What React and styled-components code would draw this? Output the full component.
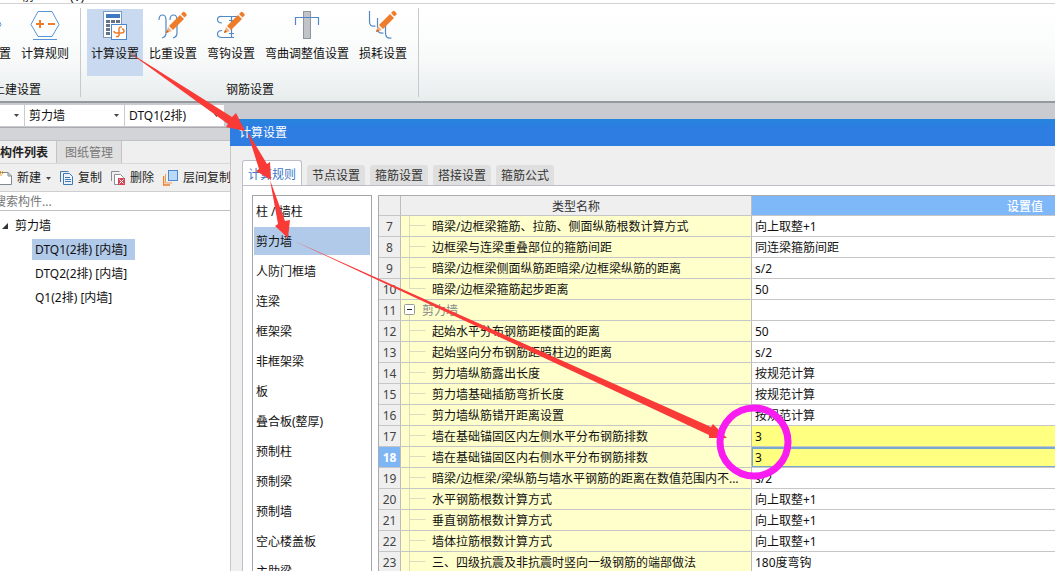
import React, { useState } from "react";
import styled, { createGlobalStyle, css } from "styled-components";

const Global = createGlobalStyle`
  *, *::before, *::after { box-sizing: border-box; }
  html, body, #root { height: 100%; margin: 0; }
  body {
    overflow: hidden;
    background: #fff;
    color: #111;
    font: 12px/20px "Noto Sans", "Noto Sans CJK SC", sans-serif;
  }
  button, input, select { font: inherit; color: inherit; margin: 0; }
`;

const Shell = styled.div`
  position: relative;
  display: flex;
  flex-direction: column;
  height: 100vh;
  overflow: hidden;
`;

/* ---------- ribbon ---------- */
const MenuStrip = styled.div`
  display: flex;
  align-items: flex-end;
  gap: 36px;
  height: 4px;
  padding-left: 22px;
  overflow: hidden;
  border-bottom: 1px solid #d2d2d2;
`;
const MenuLabel = styled.span`
  line-height: 12px;
`;
const Ribbon = styled.div`
  display: flex;
  height: 99px;
  padding: 4px 0;
  background: linear-gradient(#ffffff 10%, #f7f9f9 60%, #e7ecec);
  border-bottom: 2px solid #949a9c;
`;
const GroupClip = styled.div`
  display: flex;
  justify-content: flex-end;
  width: ${(p) => p.$width || "auto"};
  overflow: hidden;
  border-right: 1px solid #c6cacc;
`;
const Group = styled.section`
  flex: none;
  display: flex;
  flex-direction: column;
  justify-content: space-between;
  padding: 1px 7px 0 6px;
`;
const GroupItems = styled.div`
  display: flex;
  gap: 2px;
`;
const GroupTitle = styled.div`
  padding-left: 2px;
  text-align: center;
  line-height: 14px;
`;
const RibbonButton = styled.button`
  display: flex;
  flex-direction: column;
  align-items: center;
  gap: 4px;
  height: 67px;
  padding: 0 4px;
  border: 0;
  white-space: nowrap;
  background: ${(p) => (p.$active ? "#c9d9ef" : "transparent")};
  svg { display: block; width: 32px; height: 32px; }
  span { line-height: 18px; }
`;

/* ---------- selector bar ---------- */
const SelectorBar = styled.div`
  display: flex;
  gap: 1px;
  height: 25px;
  padding: 2px 0;
  background: #c9cbd0;
  border-bottom: 1px solid #a9abb0;
`;
const SelectBox = styled.div`
  position: relative;
  width: ${(p) => p.$width};
  select {
    appearance: none;
    display: block;
    width: 100%;
    height: 21px;
    padding: 0 12px 0 4px;
    border: 0;
    border-radius: 0;
    background: #fff;
  }
  svg { position: absolute; right: 5px; top: 9px; pointer-events: none; }
`;

/* ---------- component panel ---------- */
const Workspace = styled.div`
  flex: 1;
  min-height: 0;
  display: flex;
  padding-top: 12px;
  background: #d2d4d8;
`;
const SidePanel = styled.aside`
  width: 231px;
  display: flex;
  flex-direction: column;
  background: #fff;
  overflow: hidden;
`;
const SideTabs = styled.div`
  display: flex;
  height: 24px;
  background: #efefef;
  border-top: 1px solid #bfc1c5;
  border-bottom: 1px solid #d8d8d8;
`;
const SideTab = styled.button`
  display: flex;
  align-items: center;
  justify-content: flex-end;
  width: ${(p) => (p.$active ? 57 : 65)}px;
  padding: 2px 8px 0;
  border: 0;
  border-right: 1px solid #c4c4c4;
  white-space: nowrap;
  font-weight: ${(p) => (p.$active ? 700 : 400)};
  color: ${(p) => (p.$active ? "#222" : "#777")};
  background: ${(p) => (p.$active ? "#efefef" : "#e0e0e0")};
`;
const ToolRow = styled.div`
  display: flex;
  align-items: center;
  gap: 9px;
  height: 28px;
  padding-top: 1px;
  background: #efefef;
  border-bottom: 1px solid #cfcfcf;
`;
const Tool = styled.button`
  flex: none;
  display: flex;
  align-items: center;
  gap: 5px;
  padding: 0;
  border: 0;
  color: #222;
  background: transparent;
  white-space: nowrap;
  svg { display: block; }
`;
const Search = styled.input`
  height: 19px;
  padding: 1px 0 0;
  border: 0;
  border-bottom: 1px solid #c0c0c0;
  border-radius: 0;
  text-indent: -6px;
  outline: none;
  background: #fff;
  &::placeholder { color: #777; opacity: 1; }
`;
const Tree = styled.ul`
  display: flex;
  flex-direction: column;
  align-items: flex-start;
  gap: 3px;
  list-style: none;
  margin: 0;
  padding: 4px 0 0;
`;
const TreeNode = styled.li`
  display: flex;
  align-items: center;
  gap: 7px;
  height: 21px;
  margin-left: ${(p) => (p.$depth ? 32 : 2)}px;
  padding: ${(p) => (p.$depth ? "1px 8px 0 3px" : "1px 0 0")};
  background: ${(p) => (p.$active ? "#b2caea" : "transparent")};
`;

/* ---------- dialog ---------- */
const Dialog = styled.section`
  position: absolute;
  left: 230px;
  top: 119px;
  right: 0;
  bottom: 0;
  display: flex;
  flex-direction: column;
  overflow: hidden;
  background: #efefef;
`;
const DialogTitle = styled.h1`
  flex: none;
  height: 27px;
  margin: 0;
  padding-left: 9px;
  font-size: 12px;
  font-weight: 400;
  line-height: 28px;
  color: #fff;
  background: linear-gradient(#2585dc, #2d7de2 30%);
`;
const DialogBody = styled.div`
  flex: 1;
  min-height: 0;
  display: flex;
  flex-direction: column;
  padding-left: 11px;
  border-left: 1px solid #c4c6ca;
`;
const DialogTabs = styled.div`
  flex: none;
  display: flex;
  align-items: flex-end;
  gap: 5px;
  height: 39px;
`;
const DialogTab = styled.button`
  flex: none;
  border: 0;
  border-radius: 3px 3px 0 0;
  padding: 2px 5px 0;
  height: 20px;
  line-height: 18px;
  color: #333;
  background: #dfdfdf;
  ${(p) =>
    p.$active &&
    css`
      height: 25px;
      padding-top: 4px;
      border: 1px solid #bcc0c6;
      border-bottom: 0;
      color: #3a78c8;
      background: #fff;
      box-shadow: 0 1px #fff;
    `}
`;
const DialogPage = styled.div`
  flex: 1;
  min-height: 0;
  display: flex;
  align-items: stretch;
  gap: 6px;
  padding: 9px 0 0 9px;
  background: #fff;
  border-top: 1px solid #bcc0c6;
  border-left: 1px solid #bcc0c6;
  overflow: hidden;
`;
const Kinds = styled.ul`
  flex: none;
  width: 120px;
  display: flex;
  flex-direction: column;
  gap: 2px;
  list-style: none;
  margin: 0;
  padding: 1px;
  border: 1px solid #a3a5a8;
  border-bottom: 0;
  overflow: hidden;
`;
const Kind = styled.li`
  flex: none;
  height: 28px;
  padding-left: 2px;
  line-height: 30px;
  background: ${(p) => (p.$active ? "#b2caea" : "transparent")};
`;
const TableArea = styled.div`
  flex: 1;
  min-width: 0;
  overflow: hidden;
  border-left: 1px solid #a9abae;
  border-top: 1px solid #a9abae;
`;
const Table = styled.table`
  width: 920px;
  table-layout: fixed;
  border-collapse: separate;
  border-spacing: 0;
  th, td {
    height: 21px;
    padding: 2px 0 0;
    font-weight: 400;
    line-height: 18px;
    white-space: nowrap;
    overflow: hidden;
    border-right: 1px solid #bdbdbd;
    border-bottom: 1px solid #c6c6c6;
  }
  thead th { height: 20px; line-height: 17px; color: #333; background: #efefef; }
  thead th:last-child { color: #fff; font-weight: 500; background: #7fb8f9; }
`;
const RowNumber = styled.th`
  && {
    text-align: center;
    color: ${(p) => (p.$current ? "#fff" : "#444")};
    font-weight: ${(p) => (p.$current ? 700 : 400)};
    background: ${(p) => (p.$current ? "#7eb5f5" : "#efefef")};
  }
`;
const NameCell = styled.td`
  && { padding: 0; }
  background: #ffffcc;
`;
const NameLayout = styled.div`
  display: flex;
  align-items: center;
  height: 20px;
  color: ${(p) => (p.$group ? "#888" : "inherit")};
  svg { flex: none; display: block; margin-right: ${(p) => (p.$group ? 6 : 5)}px; }
  span { padding-top: 2px; }
`;
const ValueCell = styled.td`
  && {
    padding-left: 3px;
    background: ${(p) => (p.$marked ? "#ffff80" : "#fff")};
    box-shadow: ${(p) => (p.$current ? "inset 1px 2px #78a9cc, inset 0 -1px #78a9cc" : "none")};
  }
`;

/* ---------- annotations ---------- */
const Marks = styled.svg`
  position: absolute;
  left: 0;
  top: 0;
  pointer-events: none;
`;

const Arrow = () => (
  <svg width="5" height="3" viewBox="0 0 5 3"><path d="M0 0h5L2.500 3z" fill="#444" /></svg>
);
const Pencil = ({ x = 0, y = 0 }) => (
  <g transform={`translate(${x} ${y})`}>
    <path d="M0 21l2-6 4 4z" fill="#f0b080" />
    <path d="M0 21l1-3 2 2z" fill="#c85a10" />
    <path d="M3 14L14 3l4 4L7 18z" fill="#ee7d2b" />
    <path d="M15 2l2-2q1-.5 2 .5l1 1q1 1 .5 2l-2 2z" fill="#ee7d2b" />
  </g>
);
const blue = { fill: "none", stroke: "#5288c4", strokeWidth: 1.2 };
const icons = {
  rules: (
    <svg viewBox="0 0 32 32">
      <path d="M9 2.500h14l7 13-7 12H9l-7-12z" fill="#fff" stroke="#5a96d6" />
      <path d="M4 30.500h24" stroke="#5a96d6" />
      <path d="M7 15h8M11 11v8M19 15h7" stroke="#ee7d2b" strokeWidth="2" />
    </svg>
  ),
  calc: (
    <svg viewBox="0 0 32 32">
      <rect x="4.500" y="2.500" width="18" height="26" fill="#fff" stroke="#7d9cc0" />
      <rect x="7" y="5" width="14" height="4" fill="#3e78c4" />
      <path d="M7 12.500h14M7 16.500h8M7 20.500h5M7 24.500h5" stroke="#667286" strokeWidth="3" strokeDasharray="4 1" />
      <rect x="12.500" y="15.500" width="15" height="15" fill="#fff" stroke="#4a88d0" />
      <path d="M23 18q-3-.5-3 2v7M15 22q0 2 2.500 2h5q2.500 0 2.500-2t-2-2M17 27.500h3" fill="none" stroke="#ee7d2b" strokeWidth="1.500" />
    </svg>
  ),
  weight: (
    <svg viewBox="0 0 32 32">
      <path d="M2 11q0-5 3.500-5T9 11v13q0 4-4 5M13 11q0-5 3.500-5T20 11v13q0 4-4 5" {...blue} />
      <Pencil x={9} y={3} />
    </svg>
  ),
  hook: (
    <svg viewBox="0 0 32 32">
      <path d="M7 14q-4.500 0-4.500-3.500T7 7.500h15M7 21.500q-4.500 0-4.500 3.500T7 28.500h12M16.500 7.500v21M14 11.500h5M14 24.500h5" {...blue} />
      <Pencil x={9} y={3} />
    </svg>
  ),
  bend: (
    <svg viewBox="0 0 32 32">
      <rect x="12.500" y="2.500" width="7" height="27" fill="#c0c3c8" stroke="#8f959c" />
      <path d="M4.500 16V8.500h23V16" {...blue} />
    </svg>
  ),
  loss: (
    <svg viewBox="0 0 32 32">
      <path d="M2.500 2v11q0 5 6 4M10.500 9v10q0 6 6 5M18.500 15v9q0 6 6 5" {...blue} />
      <Pencil x={9} y={2} />
    </svg>
  ),
};
const NewIcon = () => (
  <svg width="12" height="16" viewBox="0 0 12 16">
    <path d="M0 2.500h8l3.500 3.500v8.500H0M8 2.500V6h3.500" fill="#fff" stroke="#808890" />
    <path d="M0 1l3 3M3 1L0 4M0 5h2" stroke="#f0a020" />
  </svg>
);
const CopyIcon = () => (
  <svg width="13" height="16" viewBox="0 0 13 16">
    <path d="M.5 12V1.500h8" fill="none" stroke="#4179b5" />
    <path d="M3.500 3.500h6l3 3v8h-9z" fill="#eaf3fc" stroke="#4179b5" />
    <path d="M5 7.500h5M5 9.500h6M5 11.500h6" stroke="#4179b5" />
  </svg>
);
const DeleteIcon = () => (
  <svg width="14" height="16" viewBox="0 0 14 16">
    <path d="M.5 11V1.500h8" fill="none" stroke="#8a8f96" />
    <path d="M3.500 4.500h6l3 3v7h-9z" fill="#fff" stroke="#8a8f96" />
    <rect x="7" y="8" width="7" height="7" fill="#d04858" />
    <path d="M8.500 9.500l4 4M12.500 9.500l-4 4" stroke="#fff" />
  </svg>
);
const LayerIcon = () => (
  <svg width="15" height="16" viewBox="0 0 15 16">
    <path d="M.5 6v9H7" fill="none" stroke="#ee7d2b" strokeWidth="1.500" />
    <path d="M2.500 4v9H9" fill="none" stroke="#ee9d5b" />
    <rect x="5.500" y=".5" width="9" height="10" fill="#b9dafa" stroke="#4a88d0" />
  </svg>
);
const Branch = ({ last, group }) =>
  group ? (
    <svg width="15" height="20" viewBox="0 0 15 20">
      <rect x="3.500" y="4.500" width="10" height="10" rx="1" fill="#fff" stroke="#999" />
      <path d="M6 9.500h5" stroke="#222" />
      <path d="M8.500 15v5" stroke="#dcdcc0" />
    </svg>
  ) : (
    <svg width="26" height="20" viewBox="0 0 26 20">
      <path d={last ? "M8.500 0v9.500h16" : "M8.500 0v20M8.500 9.500h16"} fill="none" stroke="#dcdcc0" />
    </svg>
  );

const rebarTools = [
  ["calc", "计算设置"],
  ["weight", "比重设置"],
  ["hook", "弯钩设置"],
  ["bend", "弯曲调整值设置"],
  ["loss", "损耗设置"],
];
const members = ["DTQ1(2排) [内墙]", "DTQ2(2排) [内墙]", "Q1(2排) [内墙]"];
const tabs = ["计算规则", "节点设置", "箍筋设置", "搭接设置", "箍筋公式"];
const kinds = ["柱 / 墙柱", "剪力墙", "人防门框墙", "连梁", "框架梁", "非框架梁", "板", "叠合板(整厚)", "预制柱", "预制梁", "预制墙", "空心楼盖板", "主肋梁"];
const rows = [
  { n: 7, name: "暗梁/边框梁箍筋、拉筋、侧面纵筋根数计算方式", value: "向上取整+1" },
  { n: 8, name: "边框梁与连梁重叠部位的箍筋间距", value: "同连梁箍筋间距" },
  { n: 9, name: "暗梁/边框梁侧面纵筋距暗梁/边框梁纵筋的距离", value: "s/2" },
  { n: 10, name: "暗梁/边框梁箍筋起步距离", value: "50", last: true },
  { n: 11, name: "剪力墙", value: "", group: true },
  { n: 12, name: "起始水平分布钢筋距楼面的距离", value: "50" },
  { n: 13, name: "起始竖向分布钢筋距暗柱边的距离", value: "s/2" },
  { n: 14, name: "剪力墙纵筋露出长度", value: "按规范计算" },
  { n: 15, name: "剪力墙基础插筋弯折长度", value: "按规范计算" },
  { n: 16, name: "剪力墙纵筋错开距离设置", value: "按规范计算" },
  { n: 17, name: "墙在基础锚固区内左侧水平分布钢筋排数", value: "3", marked: true },
  { n: 18, name: "墙在基础锚固区内右侧水平分布钢筋排数", value: "3", marked: true, current: true },
  { n: 19, name: "暗梁/边框梁/梁纵筋与墙水平钢筋的距离在数值范围内不...", value: "s/2" },
  { n: 20, name: "水平钢筋根数计算方式", value: "向上取整+1" },
  { n: 21, name: "垂直钢筋根数计算方式", value: "向上取整+1" },
  { n: 22, name: "墙体拉筋根数计算方式", value: "向上取整+1" },
  { n: 23, name: "三、四级抗震及非抗震时竖向一级钢筋的端部做法", value: "180度弯钩" },
];

const Picker = ({ label, width, value }) => (
  <SelectBox $width={width}>
    <select aria-label={label} defaultValue={value}>
      <option>{value}</option>
    </select>
    <Arrow />
  </SelectBox>
);

export default function App() {
  const [tab, setTab] = useState(tabs[0]);
  const [kind, setKind] = useState("剪力墙");
  return (
    <Shell>
      <Global />
      <MenuStrip>
        <MenuLabel>前</MenuLabel>
        <MenuLabel>(V)</MenuLabel>
      </MenuStrip>
      <Ribbon>
        <GroupClip $width="81px">
          <Group>
            <GroupItems>
              <RibbonButton>{icons.rules}<span>计算设置</span></RibbonButton>
              <RibbonButton>{icons.rules}<span>计算规则</span></RibbonButton>
            </GroupItems>
            <GroupTitle>土建设置</GroupTitle>
          </Group>
        </GroupClip>
        <GroupClip>
          <Group>
            <GroupItems>
              {rebarTools.map(([icon, label]) => (
                <RibbonButton key={label} $active={icon === "calc"}>
                  {icons[icon]}
                  <span>{label}</span>
                </RibbonButton>
              ))}
            </GroupItems>
            <GroupTitle>钢筋设置</GroupTitle>
          </Group>
        </GroupClip>
      </Ribbon>
      <SelectorBar>
        <Picker label="类型" width="24px" value="" />
        <Picker label="构件类型" width="99px" value="剪力墙" />
        <Picker label="构件" width="99px" value="DTQ1(2排)" />
      </SelectorBar>
      <Workspace>
        <SidePanel>
          <SideTabs>
            <SideTab $active>构件列表</SideTab>
            <SideTab>图纸管理</SideTab>
          </SideTabs>
          <ToolRow>
            <Tool><NewIcon />新建<Arrow /></Tool>
            <Tool><CopyIcon />复制</Tool>
            <Tool><DeleteIcon />删除</Tool>
            <Tool><LayerIcon />层间复制</Tool>
          </ToolRow>
          <Search aria-label="搜索构件" placeholder="搜索构件..." />
          <Tree>
            <TreeNode>
              <svg width="6" height="6" viewBox="0 0 6 6"><path d="M6 0v6H0z" fill="#333" /></svg>
              剪力墙
            </TreeNode>
            {members.map((m, i) => (
              <TreeNode key={m} $depth={1} $active={i === 0}>{m}</TreeNode>
            ))}
          </Tree>
        </SidePanel>
      </Workspace>
      <Dialog aria-label="计算设置">
        <DialogTitle>计算设置</DialogTitle>
        <DialogBody>
          <DialogTabs>
            {tabs.map((t) => (
              <DialogTab key={t} $active={t === tab} onClick={() => setTab(t)}>{t}</DialogTab>
            ))}
          </DialogTabs>
          <DialogPage>
            <Kinds>
              {kinds.map((k) => (
                <Kind key={k} $active={k === kind} onClick={() => setKind(k)}>{k}</Kind>
              ))}
            </Kinds>
            <TableArea>
              <Table>
                <colgroup>
                  <col style={{ width: 22 }} />
                  <col style={{ width: 351 }} />
                  <col />
                </colgroup>
                <thead>
                  <tr><th aria-label="序号" /><th>类型名称</th><th>设置值</th></tr>
                </thead>
                <tbody>
                  {rows.map((r) => (
                    <tr key={r.n}>
                      <RowNumber scope="row" $current={r.current}>{r.n}</RowNumber>
                      <NameCell>
                        <NameLayout $group={r.group}>
                          <Branch last={r.last} group={r.group} />
                          <span>{r.name}</span>
                        </NameLayout>
                      </NameCell>
                      <ValueCell $marked={r.marked} $current={r.current}>{r.value}</ValueCell>
                    </tr>
                  ))}
                </tbody>
              </Table>
            </TableArea>
          </DialogPage>
        </DialogBody>
      </Dialog>
      <Marks width="1055" height="571" viewBox="0 0 1055 571" aria-hidden="true">
        <g fill="#f93a37">
          <path d="M127 51L232 117 236 113 245 131 226 127 228 124z" />
          <path d="M247 131L267 164 270 162 271 180 256 171 259 169z" />
          <path d="M270 180L285 221 290 220 288 238 275 226 278 224z" />
          <path d="M292 240L711 427 713 424 727 438 709 438 709 435z" />
        </g>
        <circle cx="754" cy="442" r="34" fill="none" stroke="#f81cf0" strokeWidth="7" />
      </Marks>
    </Shell>
  );
}
